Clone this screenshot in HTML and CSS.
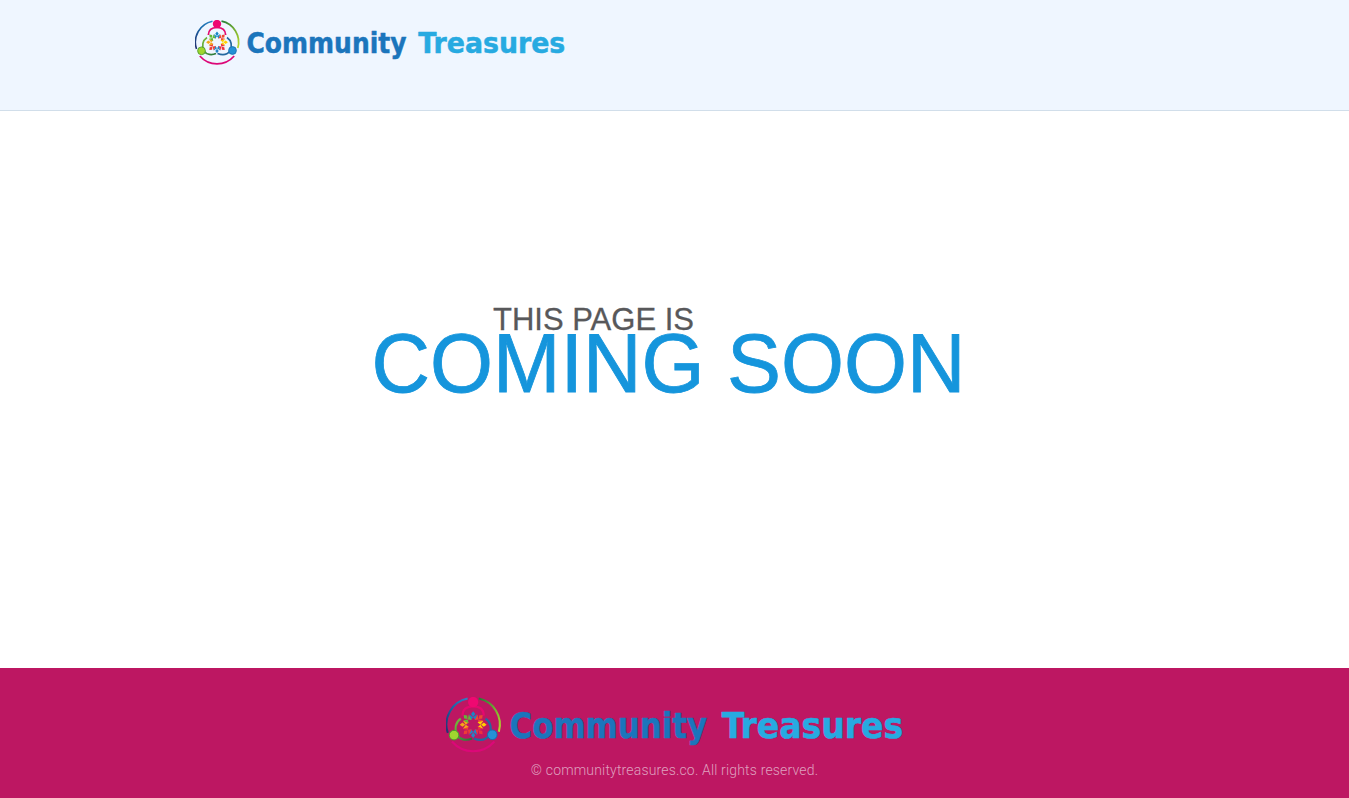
FILE: index.html
```html
<!DOCTYPE html>
<html lang="en">
<head>
<meta charset="utf-8">
<title>Community Treasures</title>
<link rel="stylesheet" href="styles.css">
</head>
<body>
<svg class="defs" aria-hidden="true">
  <defs>
    <linearGradient id="ringLeft" x1="0" y1="1" x2="1" y2="0"><stop offset="0" stop-color="#23306f"/><stop offset=".55" stop-color="#1769ab"/><stop offset="1" stop-color="#2d83c4"/></linearGradient>
    <linearGradient id="ringRight" x1="0" y1="0" x2="1" y2="1"><stop offset="0" stop-color="#237a38"/><stop offset="1" stop-color="#b8d92d"/></linearGradient>
    <linearGradient id="armLeft" x1="0" y1="0" x2="1" y2="1"><stop offset="0" stop-color="#79bd3b"/><stop offset="1" stop-color="#23753a"/></linearGradient>
    <path id="petal" d="M22 12.200L23.600 14.300L22 16.400L20.400 14.300ZM19 14.600L22 16.800L20.300 19ZM25 14.600L22 16.800L23.700 19Z"/>
    <symbol id="logo" viewBox="0 0 371 46">
      <g fill="none">
        <path d="M1.500 29A21.400 21.400 0 0 1 17.500 1.200" stroke="url(#ringLeft)" stroke-width="1.600"/>
        <path d="M26.500 1.200A21.400 21.400 0 0 1 42.800 28" stroke="url(#ringRight)" stroke-width="1.700"/>
        <path d="M4.800 36C14 46.500 30 46.500 39.200 36" stroke="#dc0878" stroke-width="1.700"/>
        <path d="M13.300 15C13.500 10 17 7.500 22 7.500C27 7.500 30.500 10 30.700 15" stroke="#e5086e" stroke-width="1.700"/>
        <path d="M12 17.500C7.500 20.500 6.500 26 9 31C11.500 35 17 35.300 21 33.500" stroke="url(#armLeft)" stroke-width="1.700"/>
        <path d="M32 17.500C36.500 20.500 37.500 26 35 31C32 35 27 35.300 22.500 33.500" stroke="#24689f" stroke-width="1.700"/>
      </g>
      <g transform="translate(22 22.300) scale(1.080) translate(-22 -22.300)">
        <use href="#petal" fill="#1789c7"/>
        <use href="#petal" fill="#ef4932" transform="rotate(45 22 22.300)"/>
        <use href="#petal" fill="#ffd000" transform="rotate(90 22 22.300)"/>
        <use href="#petal" fill="#ec3240" transform="rotate(135 22 22.300)"/>
        <use href="#petal" fill="#2486c5" transform="rotate(180 22 22.300)"/>
        <use href="#petal" fill="#ee3d36" transform="rotate(225 22 22.300)"/>
        <use href="#petal" fill="#f6a517" transform="rotate(270 22 22.300)"/>
        <use href="#petal" fill="#64b838" transform="rotate(315 22 22.300)"/>
      </g>
      <circle cx="22" cy="4" r="4.200" fill="#ef0871"/>
      <circle cx="6.500" cy="30.800" r="3.900" fill="#9fd62f" stroke="#47972d" stroke-width=".8"/>
      <circle cx="37.500" cy="30.500" r="3.900" fill="#2391d6" stroke="#166dad" stroke-width=".8"/>
      <text class="wordmark" x="51.500" y="32.900" textLength="160" lengthAdjust="spacingAndGlyphs" fill="#1b75bc" stroke="#1b75bc">Community</text>
      <text class="wordmark" x="223.300" y="32.900" textLength="147" lengthAdjust="spacingAndGlyphs" fill="#27aae1" stroke="#27aae1">Treasures</text>
    </symbol>
  </defs>
</svg>
<header class="header">
  <div class="container">
    <svg class="logo" role="img" aria-label="Community Treasures"><use href="#logo"/></svg>
  </div>
</header>
<main class="main">
  <svg class="notice" viewBox="0 0 620 110">
    <text class="intro" x="133" y="35" textLength="201" lengthAdjust="spacingAndGlyphs">THIS PAGE IS</text>
    <text class="headline" x="11.500" y="97" textLength="594" lengthAdjust="spacingAndGlyphs">COMING SOON</text>
  </svg>
</main>
<footer class="footer">
  <svg class="footer-logo" role="img" aria-label="Community Treasures"><use href="#logo"/></svg>
  <p class="copyright">© communitytreasures.co. All rights reserved.</p>
</footer>
</body>
</html>
```
FILE: styles.css
```css
* { box-sizing: border-box; }
body {
  margin: 0;
  min-height: 798px;
  display: flex;
  flex-direction: column;
  background: #fff;
  font-family: Roboto, sans-serif;
}
.defs { position: absolute; width: 0; height: 0; }
.header {
  height: 111px;
  padding-top: 20px;
  background: #eff6ff;
  border-bottom: 1px solid #d1deea;
}
.container { width: 960px; margin: 0 auto; }
.logo { display: block; width: 371px; height: 46px; }
.wordmark {
  font-family: "DejaVu Sans", sans-serif;
  font-size: 28.5px;
  font-weight: 700;
  stroke-width: .5px;
  stroke-linejoin: round;
}
.main { height: 557px; padding: 184px 0 0 360px; }
.notice { display: block; width: 620px; height: 110px; overflow: visible; }
.intro { font-family: "Liberation Sans", Arial, sans-serif; font-size: 32px; fill: #58585a; stroke: #58585a; stroke-width: .3px; }
.headline { font-family: "Liberation Sans", Arial, sans-serif; font-size: 83px; fill: #1595dc; stroke: #1595dc; stroke-width: .8px; }
.footer {
  height: 130px;
  padding-top: 29px;
  display: flex;
  flex-direction: column;
  align-items: center;
  background: #bd1762;
}
.footer-logo { display: block; width: 458px; height: 57px; }
.copyright {
  margin: 6px 0 0;
  font-size: 14px;
  line-height: 20px;
  font-weight: 300;
  letter-spacing: .17px;
  color: #dfa0bf;
}
```
